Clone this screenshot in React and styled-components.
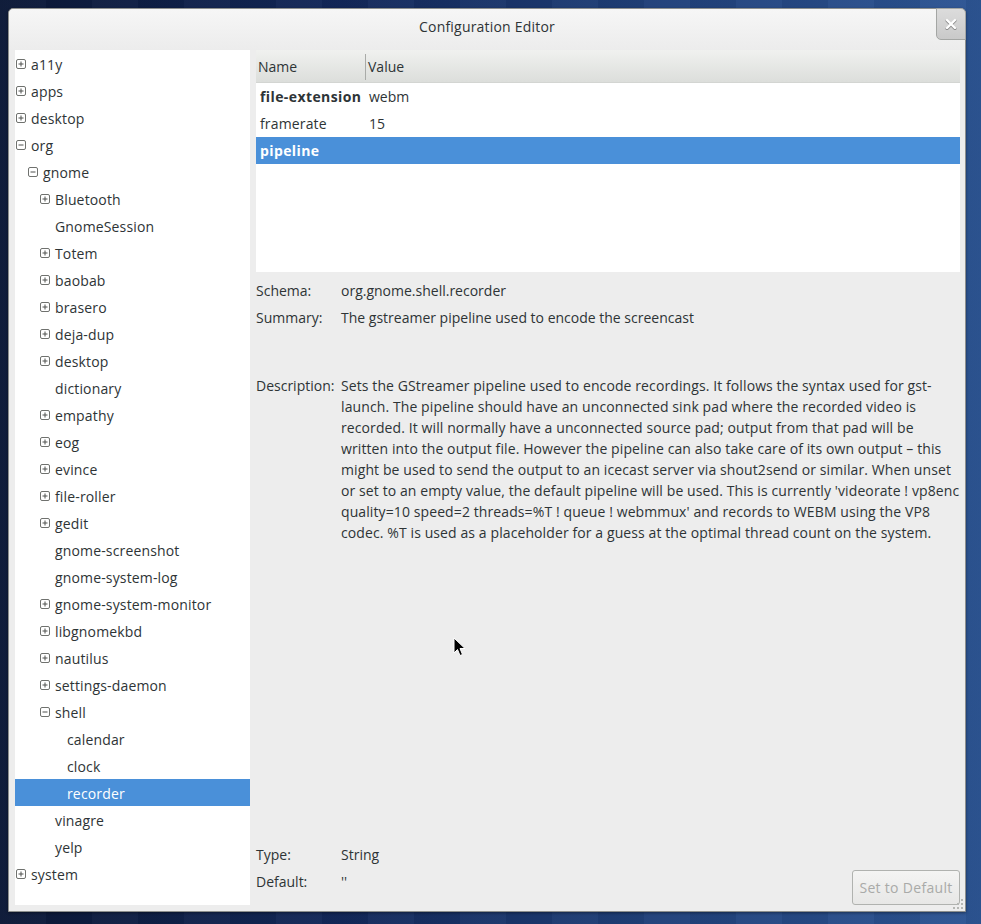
import React from "react";
import styled, { createGlobalStyle } from "styled-components";

const Global = createGlobalStyle`
  html, body { margin: 0; padding: 0; }
  body {
    width: 981px;
    height: 924px;
    overflow: hidden;
    font-family: "Open Sans", "Noto Sans", sans-serif;
    font-size: 14px;
    color: #2e3436;
  }
`;

const Desktop = styled.div`
  position: relative;
  width: 981px;
  height: 924px;
  box-sizing: border-box;
  padding: 8px 15px 12px 8px;
  background:
    repeating-linear-gradient(90deg, rgba(255,255,255,0.025) 0 46px, rgba(0,0,0,0.04) 46px 92px),
    linear-gradient(90deg, #0b1836 0%, #13285a 35%, #1f3f78 65%, #2d5594 100%);
`;

const Window = styled.div`
  position: relative;
  width: 958px;
  height: 904px;
  box-sizing: border-box;
  border: 1px solid #8d8f8d;
  border-radius: 5px 5px 0 0;
  background: #ededed;
  display: flex;
  flex-direction: column;
  box-shadow: 0 1px 3px rgba(0,0,0,0.4);
`;

const TitleBar = styled.div`
  height: 41px;
  display: grid;
  grid-template-columns: 1fr auto 1fr;
  background: linear-gradient(#f6f6f6, #ececec);
  border-radius: 5px 5px 0 0;
`;

const Title = styled.div`
  grid-column: 2;
  padding-top: 9px;
  line-height: 18px;
  font-size: 14px;
  letter-spacing: 0.2px;
  color: #2e3436;
`;

const CloseButton = styled.div`
  grid-column: 3;
  justify-self: end;
  align-self: start;
  width: 30px;
  height: 32px;
  margin: -1px -1px 0 0;
  box-sizing: border-box;
  border: 1px solid #a4a6a4;
  border-radius: 0 5px 0 5px;
  background: linear-gradient(#dcdcdc, #c9c9c9);
  display: flex;
  align-items: center;
  justify-content: center;
`;

const Body = styled.div`
  flex: 1;
  display: flex;
  gap: 6px;
  padding: 0 5px 6px 6px;
  min-height: 0;
`;

const Tree = styled.div`
  width: 235px;
  background: #ffffff;
  display: flex;
  flex-direction: column;
`;

const TreeRow = styled.div`
  height: 27px;
  display: flex;
  align-items: center;
  padding-left: ${(p) => 1 + p.$level * 12}px;
  background: ${(p) => (p.$selected ? "#4a90d9" : "transparent")};
  color: ${(p) => (p.$selected ? "#ffffff" : "#2e3436")};
  white-space: nowrap;
  letter-spacing: 0.15px;
  padding-top: 1px;
  box-sizing: border-box;
`;

const ExpanderSlot = styled.span`
  width: 10px;
  height: 10px;
  margin-right: 5px;
  display: inline-flex;
  flex: none;
`;

const Right = styled.div`
  flex: 1;
  display: flex;
  flex-direction: column;
  min-width: 0;
`;

const ListBox = styled.div`
  height: 222px;
  background: #ffffff;
  display: flex;
  flex-direction: column;
`;

const ListHeader = styled.div`
  height: 33px;
  box-sizing: border-box;
  display: grid;
  grid-template-columns: 109px 1fr;
  align-items: center;
  background: linear-gradient(#f0f1ef, #dcdedb);
  border-bottom: 1px solid #d3d5d2;
  color: #2e3436;
  padding-top: 2px;
`;

const HeaderCell = styled.div`
  padding-left: ${(p) => p.$pad}px;
  height: 26px;
  line-height: 26px;
  border-left: ${(p) => (p.$divider ? "1px solid #a9aba8" : "none")};
`;

const ListRow = styled.div`
  height: 27px;
  display: grid;
  grid-template-columns: 109px 1fr;
  align-items: center;
  background: ${(p) => (p.$selected ? "#4a90d9" : "transparent")};
  color: ${(p) => (p.$selected ? "#ffffff" : "#2e3436")};
`;

const NameCell = styled.div`
  padding-left: 4px;
  font-weight: ${(p) => (p.$bold ? 700 : 400)};
  letter-spacing: ${(p) => (p.$bold ? "0.4px" : "0.15px")};
  white-space: nowrap;
`;

const ValueCell = styled.div`
  padding-left: 4px;
  white-space: nowrap;
`;

const InfoGrid = styled.div`
  margin-top: ${(p) => p.$top || 0}px;
  display: grid;
  grid-template-columns: 85px 1fr;
  grid-auto-rows: 27px;
  align-items: center;
`;

const Label = styled.div`
  white-space: nowrap;
`;

const Value = styled.div`
  white-space: nowrap;
`;

const DescBlock = styled.div`
  margin-top: 44px;
  display: grid;
  grid-template-columns: 85px 1fr;
  line-height: 21px;
`;

const DescText = styled.div`
  display: flex;
  flex-direction: column;
`;

const DescLine = styled.span`
  white-space: nowrap;
  letter-spacing: 0.1px;
`;

const Spacer = styled.div`
  flex: 1;
`;

const Footer = styled.div`
  display: flex;
  align-items: flex-end;
  justify-content: space-between;
`;

const FooterGrid = styled(InfoGrid)`
  padding-bottom: 10px;
  flex: 1;
`;

const Button = styled.button`
  width: 108px;
  height: 35px;
  box-sizing: border-box;
  border: 1px solid #b0b2af;
  border-radius: 3px;
  background: linear-gradient(#f4f4f3, #e7e7e6);
  color: #a9aaa8;
  font-family: inherit;
  font-size: 14px;
  letter-spacing: 0.3px;
  padding: 0;
`;

const Grip = styled.svg`
  position: absolute;
  right: 1px;
  bottom: 1px;
`;

const Cursor = styled.svg`
  position: absolute;
  left: 453px;
  top: 637px;
`;

const Expander = ({ open }) => (
  <svg width="10" height="10" viewBox="0 0 10 10">
    <rect x="0.5" y="0.5" width="9" height="9" rx="1.5" fill="#fff" stroke="#6f716e" />
    <line x1="2.5" y1="5" x2="7.5" y2="5" stroke="#4f514e" strokeWidth="1" />
    {!open && <line x1="5" y1="2.5" x2="5" y2="7.5" stroke="#4f514e" strokeWidth="1" />}
  </svg>
);

const treeItems = [
  { t: "a11y", l: 0, e: "+" },
  { t: "apps", l: 0, e: "+" },
  { t: "desktop", l: 0, e: "+" },
  { t: "org", l: 0, e: "-" },
  { t: "gnome", l: 1, e: "-" },
  { t: "Bluetooth", l: 2, e: "+" },
  { t: "GnomeSession", l: 2 },
  { t: "Totem", l: 2, e: "+" },
  { t: "baobab", l: 2, e: "+" },
  { t: "brasero", l: 2, e: "+" },
  { t: "deja-dup", l: 2, e: "+" },
  { t: "desktop", l: 2, e: "+" },
  { t: "dictionary", l: 2 },
  { t: "empathy", l: 2, e: "+" },
  { t: "eog", l: 2, e: "+" },
  { t: "evince", l: 2, e: "+" },
  { t: "file-roller", l: 2, e: "+" },
  { t: "gedit", l: 2, e: "+" },
  { t: "gnome-screenshot", l: 2 },
  { t: "gnome-system-log", l: 2 },
  { t: "gnome-system-monitor", l: 2, e: "+" },
  { t: "libgnomekbd", l: 2, e: "+" },
  { t: "nautilus", l: 2, e: "+" },
  { t: "settings-daemon", l: 2, e: "+" },
  { t: "shell", l: 2, e: "-" },
  { t: "calendar", l: 3 },
  { t: "clock", l: 3 },
  { t: "recorder", l: 3, sel: true },
  { t: "vinagre", l: 2 },
  { t: "yelp", l: 2 },
  { t: "system", l: 0, e: "+" },
];

const descLines = [
  "Sets the GStreamer pipeline used to encode recordings. It follows the syntax used for gst-",
  "launch. The pipeline should have an unconnected sink pad where the recorded video is",
  "recorded. It will normally have a unconnected source pad; output from that pad will be",
  "written into the output file. However the pipeline can also take care of its own output \u2013 this",
  "might be used to send the output to an icecast server via shout2send or similar. When unset",
  "or set to an empty value, the default pipeline will be used. This is currently 'videorate ! vp8enc",
  "quality=10 speed=2 threads=%T ! queue ! webmmux' and records to WEBM using the VP8",
  "codec. %T is used as a placeholder for a guess at the optimal thread count on the system.",
];

export default function App() {
  return (
    <>
      <Global />
      <Desktop>
        <Window>
          <TitleBar>
            <Title>Configuration Editor</Title>
            <CloseButton>
              <svg width="12" height="12" viewBox="0 0 12 12">
                <path d="M2 2 L10 10 M10 2 L2 10" stroke="#8a8a8a" strokeWidth="3" strokeLinecap="round" transform="translate(0,0.8)" />
                <path d="M2 2 L10 10 M10 2 L2 10" stroke="#ffffff" strokeWidth="2.4" strokeLinecap="round" />
              </svg>
            </CloseButton>
          </TitleBar>
          <Body>
            <Tree>
              {treeItems.map((it, i) => (
                <TreeRow key={i} $level={it.l} $selected={it.sel}>
                  <ExpanderSlot>{it.e && <Expander open={it.e === "-"} />}</ExpanderSlot>
                  {it.t}
                </TreeRow>
              ))}
            </Tree>
            <Right>
              <ListBox>
                <ListHeader>
                  <HeaderCell $pad={2}>Name</HeaderCell>
                  <HeaderCell $pad={2} $divider>Value</HeaderCell>
                </ListHeader>
                <ListRow>
                  <NameCell $bold>file-extension</NameCell>
                  <ValueCell>webm</ValueCell>
                </ListRow>
                <ListRow>
                  <NameCell>framerate</NameCell>
                  <ValueCell>15</ValueCell>
                </ListRow>
                <ListRow $selected>
                  <NameCell $bold>pipeline</NameCell>
                  <ValueCell></ValueCell>
                </ListRow>
              </ListBox>
              <InfoGrid $top={5}>
                <Label>Schema:</Label>
                <Value>org.gnome.shell.recorder</Value>
                <Label>Summary:</Label>
                <Value>The gstreamer pipeline used to encode the screencast</Value>
              </InfoGrid>
              <DescBlock>
                <Label>Description:</Label>
                <DescText>
                  {descLines.map((l, i) => (
                    <DescLine key={i}>{l}</DescLine>
                  ))}
                </DescText>
              </DescBlock>
              <Spacer />
              <Footer>
                <FooterGrid>
                  <Label>Type:</Label>
                  <Value>String</Value>
                  <Label>Default:</Label>
                  <Value>''</Value>
                </FooterGrid>
                <Button disabled>Set to Default</Button>
              </Footer>
            </Right>
          </Body>
          <Grip width="12" height="12" viewBox="0 0 12 12">
            {[[9, 1], [9, 5], [5, 5], [9, 9], [5, 9], [1, 9]].map(([x, y], i) => (
              <rect key={i} x={x} y={y} width="2" height="2" fill="#b5b7b4" />
            ))}
          </Grip>
        </Window>
        <Cursor width="14" height="21" viewBox="0 0 14 21">
          <path d="M1 1 L1 16 L4.5 12.5 L7 18.5 L9.5 17.5 L7 11.5 L12 11.5 Z" fill="#000" stroke="#fff" strokeWidth="1" strokeLinejoin="round" />
        </Cursor>
      </Desktop>
    </>
  );
}
